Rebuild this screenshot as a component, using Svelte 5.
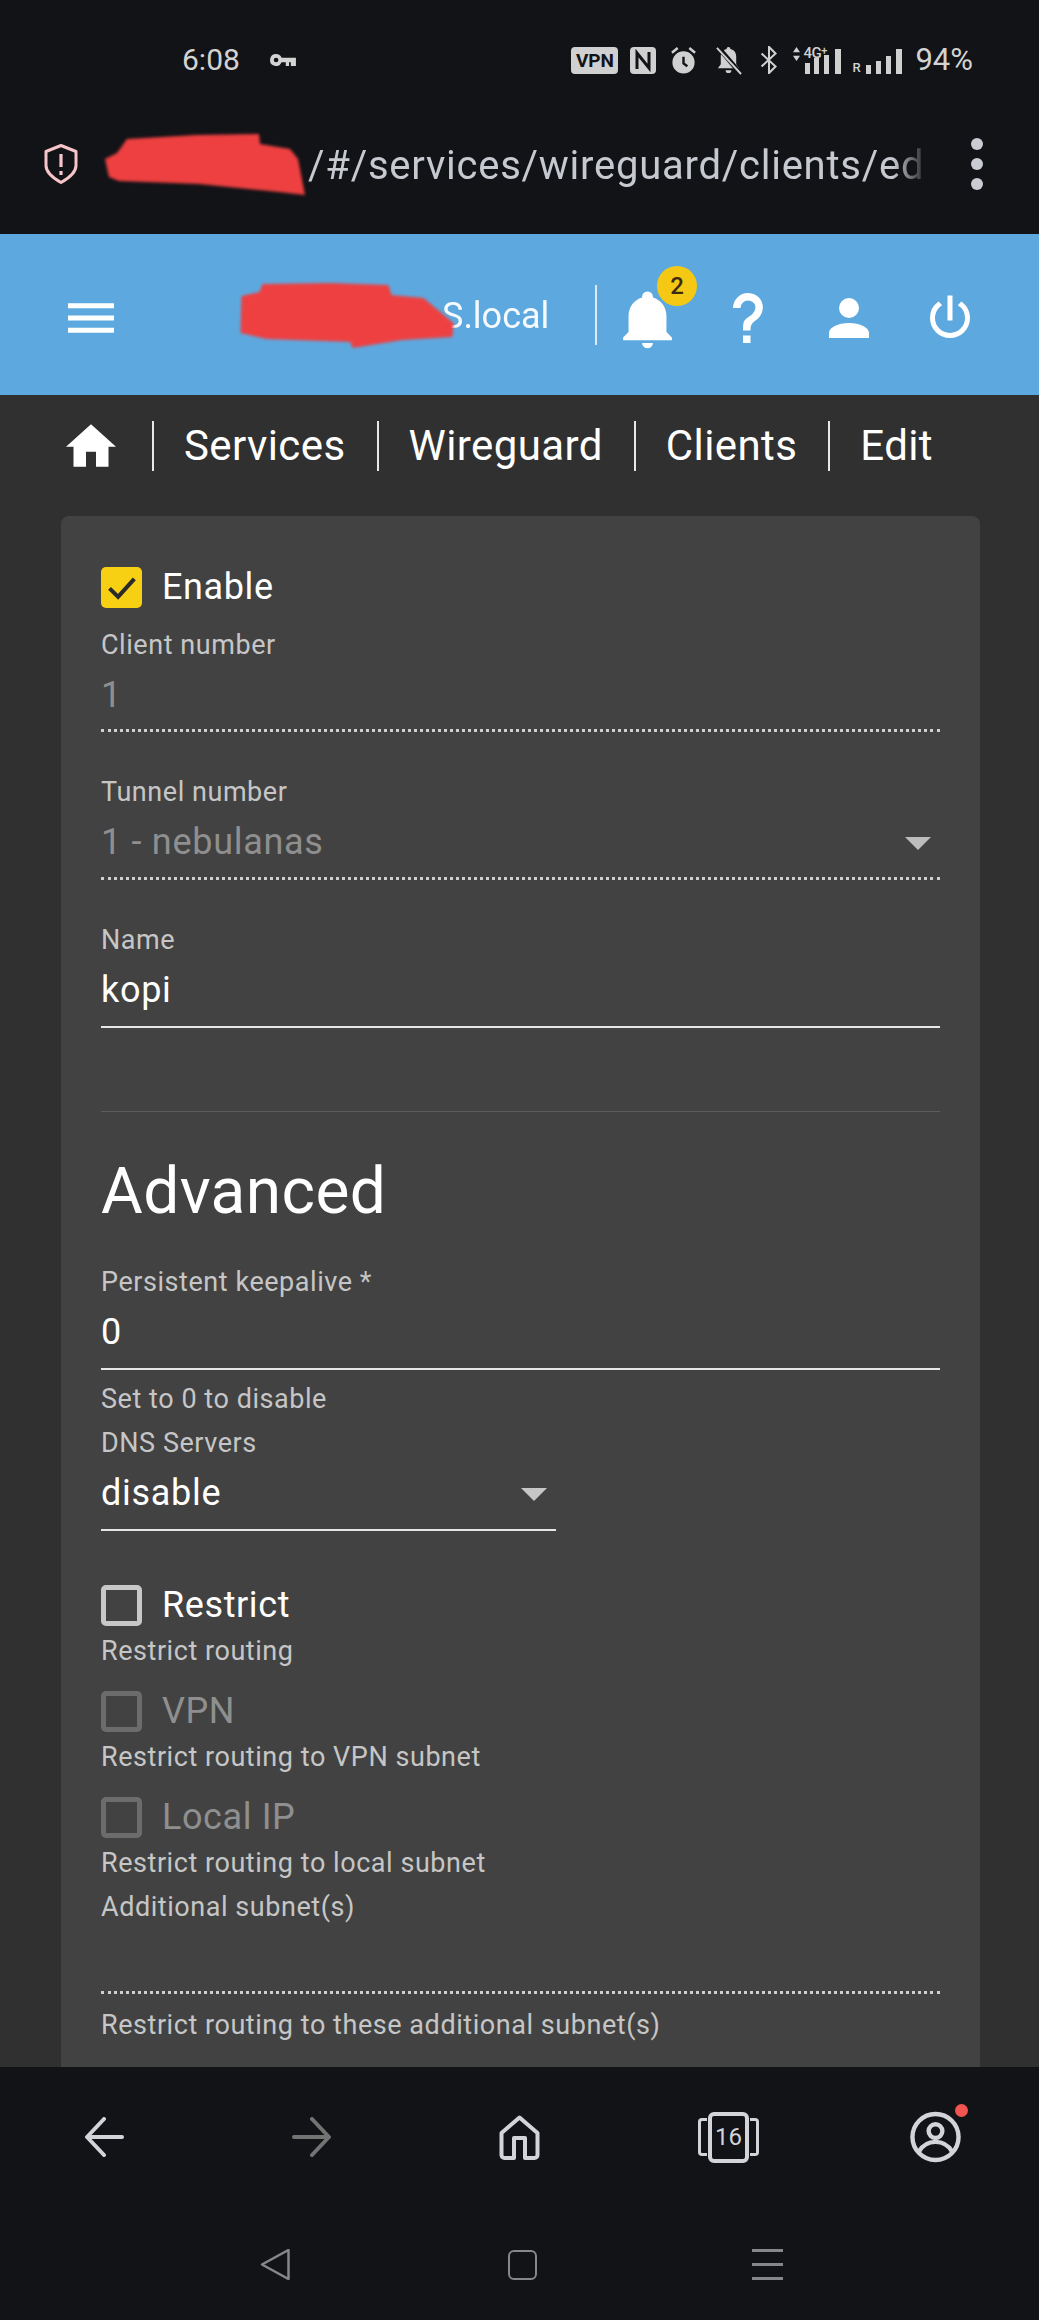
<script>
  const crumbs = ['Services', 'Wireguard', 'Clients', 'Edit'];
</script>

<div class="page">
  <div class="browser-top">
    <div class="status">
      <div class="status-left">
        <span class="time">6:08</span>
        <svg class="key" viewBox="0 0 28 13"><path d="M6.500 0a6.500 6.500 0 1 0 6 9H17v4h3.500V9h2v4H28V4H12.500A6.500 6.500 0 0 0 6.500 0zm0 4a2.500 2.500 0 1 1 0 5 2.500 2.500 0 0 1 0-5z" fill="#d3d3d3" fill-rule="evenodd"/></svg>
      </div>
      <div class="status-right">
        <span class="vpn">VPN</span>
        <svg class="si nfc" viewBox="0 0 26 27"><rect width="26" height="27" rx="4" fill="#d0d0d0"/><path d="M7 22V6l12 15V5" fill="none" stroke="#121317" stroke-width="3"/></svg>
        <svg class="si alarm" viewBox="0 0 28 30"><circle cx="14" cy="17" r="11.500" fill="#d0d0d0"/><path d="M14 11v7l4 3" fill="none" stroke="#121317" stroke-width="2.500"/><path d="M2 7l6-5M26 7l-6-5" stroke="#d0d0d0" stroke-width="2.500"/></svg>
        <svg class="si mute" viewBox="0 0 28 30"><path d="M14 1a2 2 0 0 1 2 2c4 1 6 4 6 8v8l3 4H3l3-4v-8c0-4 2-7 6-8a2 2 0 0 1 2-2zM11 25h6a3 3 0 0 1-6 0z" fill="#d0d0d0"/><path d="M3 1l24 28" stroke="#121317" stroke-width="5"/><path d="M2 2l25 27" stroke="#d0d0d0" stroke-width="2"/></svg>
        <svg class="si bt" viewBox="0 0 20 30"><path d="M2 8l15 14-7 7V1l7 7L2 22" fill="none" stroke="#d0d0d0" stroke-width="2.200"/></svg>
        <div class="net">
          <svg class="arrows" viewBox="0 0 10 16"><path d="M5 0l4 6H1zM5 16l4-6H1z" fill="#d0d0d0"/></svg>
          <span class="g4">4G<sup>+</sup></span>
          <svg class="bars1" viewBox="0 0 37 25"><path d="M0 14h5v11H0zM9 9h5v16H9zM19 6h5v19h-5zM30 0h6v25h-6z" fill="#d0d0d0"/></svg>
        </div>
        <div class="net2">
          <span class="r">R</span>
          <svg class="bars2" viewBox="0 0 36 25"><path d="M0 16h5v9H0zM10 12h5v13h-5zM20 7h5v18h-5zM30 0h6v25h-6z" fill="#d0d0d0"/></svg>
        </div>
        <span class="batt">94%</span>
      </div>
    </div>
    <div class="urlbar">
      <svg class="shield" viewBox="0 0 34 40"><path d="M17 1.500l15 6v14c0 7-6 12-15 17C8 33.500 2 28.500 2 21.500v-14z" fill="none" stroke="#f6c4c9" stroke-width="3" stroke-linejoin="round"/><path d="M17 10v13M17 27v4" stroke="#f6c4c9" stroke-width="3.200"/></svg>
      <div class="url">
        <svg class="blob blob-url" viewBox="0 0 205 66"><path d="M2 28l12-6 10-14 70-4 62-1 1 10 30 5 8 10 7 36-26-3-80-8-80-3-10-4z" fill="#ee4041"/></svg>
        <span class="url-text">/#/services/wireguard/clients/ed</span>
      </div>
      <div class="dots"><i></i><i></i><i></i></div>
    </div>
  </div>

  <main class="main">
    <header class="bar">
      <svg class="menu" viewBox="0 0 47 30"><path d="M0 0h47v5H0zM0 12.500h47v5H0zM0 25h47v5H0z" fill="#fff"/></svg>
      <div class="host">
        <svg class="blob blob-host" viewBox="0 0 212 68"><path d="M0 14l18-4 3-8 68-1 58 2 3 10 32 3 30 25-1 14-50 3-50 8-2-6-84-3-26-6z" fill="#ee4041"/></svg>
        <span class="host-text">S.local</span>
      </div>
      <span class="bar-div"></span>
      <div class="bell">
        <svg viewBox="0 0 24 24"><path d="M21 19v1H3v-1l2-2v-6c0-3.100 2.030-5.830 5-6.710V4a2 2 0 0 1 4 0v.29c2.970.88 5 3.610 5 6.710v6l2 2m-7 2a2 2 0 0 1-4 0" fill="#fff"/></svg>
        <span class="badge">2</span>
      </div>
      <svg class="hicon" viewBox="0 0 24 24"><path d="M10 19h3v3h-3v-3m2-17c5.350.22 7.680 5.620 4.500 9.670-.83 1-2.170 1.660-2.830 2.500C13 15 13 16 13 17h-3c0-1.670 0-3.080.67-4.080.66-1 2-1.590 2.830-2.250C15.920 8.430 15.320 5.260 12 5a3 3 0 0 0-3 3H6a6 6 0 0 1 6-6z" fill="#fff"/></svg>
      <svg class="hicon" viewBox="0 0 24 24"><path d="M12 4a4 4 0 0 1 4 4 4 4 0 0 1-4 4 4 4 0 0 1-4-4 4 4 0 0 1 4-4m0 10c4.420 0 8 1.790 8 4v2H4v-2c0-2.210 3.580-4 8-4z" fill="#fff"/></svg>
      <svg class="hicon" viewBox="0 0 24 24"><path d="M16.560 5.440l-1.450 1.450A5.969 5.969 0 0 1 18 12a6 6 0 0 1-6 6 6 6 0 0 1-6-6c0-2.170 1.160-4.060 2.880-5.120L7.440 5.440A7.961 7.961 0 0 0 4 12a8 8 0 0 0 8 8 8 8 0 0 0 8-8c0-2.720-1.360-5.120-3.440-6.560M13 3h-2v10h2" fill="#fff"/></svg>
    </header>

    <nav class="crumbs">
      <svg class="home" viewBox="2 3 20 17"><path d="M10 20v-6h4v6h5v-8h3L12 3 2 12h3v8z" fill="#fff"/></svg>
      {#each crumbs as c}
        <span class="crumb">{c}</span>
      {/each}
    </nav>

    <section class="card">
      <div class="check first">
        <span class="box on"><svg viewBox="0 0 24 24"><path d="M5 12.500l5 5L19.500 7" fill="none" stroke="#2a2a2a" stroke-width="2.400"/></svg></span>
        <span class="check-label">Enable</span>
      </div>

      <div class="field f-client disabled">
        <label>Client number</label>
        <div class="value">1</div>
      </div>
      <div class="field f-gap disabled">
        <label>Tunnel number</label>
        <div class="value">1 - nebulanas<span class="caret"></span></div>
      </div>
      <div class="field f-gap">
        <label>Name</label>
        <div class="value">kopi</div>
      </div>

      <hr />
      <h2>Advanced</h2>

      <div class="field f-adv">
        <label>Persistent keepalive *</label>
        <div class="value">0</div>
      </div>
      <p class="hint h-key">Set to 0 to disable</p>
      <div class="field f-dns short">
        <label>DNS Servers</label>
        <div class="value">disable<span class="caret"></span></div>
      </div>

      <div class="check c-restrict">
        <span class="box"></span>
        <span class="check-label">Restrict</span>
      </div>
      <p class="hint h-check">Restrict routing</p>
      <div class="check c-sub off">
        <span class="box"></span>
        <span class="check-label">VPN</span>
      </div>
      <p class="hint h-check">Restrict routing to VPN subnet</p>
      <div class="check c-sub off">
        <span class="box"></span>
        <span class="check-label">Local IP</span>
      </div>
      <p class="hint h-check">Restrict routing to local subnet</p>
      <div class="field f-extra disabled">
        <label>Additional subnet(s)</label>
        <div class="value">&nbsp;</div>
      </div>
      <p class="hint h-last">Restrict routing to these additional subnet(s)</p>
    </section>
  </main>

  <footer class="bottom">
    <div class="tools">
      <svg class="t-back" viewBox="0 0 40 40"><path d="M20 2L3 20l17 18M4 20h34" fill="none" stroke="#d2d4d9" stroke-width="4" stroke-linecap="round" stroke-linejoin="round"/></svg>
      <svg class="t-fwd" viewBox="0 0 40 40"><path d="M20 2l17 18-17 18M36 20H2" fill="none" stroke="#737373" stroke-width="4" stroke-linecap="round" stroke-linejoin="round"/></svg>
      <svg class="t-home" viewBox="0 0 41 45"><path d="M20.500 2.500L2.500 18v22a3 3 0 0 0 3 3H15V23h11v20h9.500a3 3 0 0 0 3-3V18z" fill="none" stroke="#d2d4d9" stroke-width="4" stroke-linejoin="round"/></svg>
      <div class="tabs">
        <span class="tabs-side"></span>
        <span class="tabs-main">16</span>
        <span class="tabs-side"></span>
      </div>
      <div class="acct">
        <svg viewBox="0 0 52 52"><circle cx="26" cy="26" r="23.500" fill="none" stroke="#d2d4d9" stroke-width="4.500"/><circle cx="26" cy="20" r="7" fill="none" stroke="#d2d4d9" stroke-width="4.500"/><path d="M9 41c4-7 10-10 17-10s13 3 17 10" fill="none" stroke="#d2d4d9" stroke-width="4.500"/></svg>
        <span class="dot"></span>
      </div>
    </div>
    <div class="softkeys">
      <svg class="soft" viewBox="0 0 30 31"><path d="M28.500 1L2 15.500 28.500 30z" fill="none" stroke="#85878b" stroke-width="2.500" stroke-linejoin="round"/></svg>
      <span class="soft-home"></span>
      <div class="soft-menu"><i></i><i></i><i></i></div>
    </div>
  </footer>
</div>

<style>
  :global(body) { margin: 0; background: #121317; }
  .page {
    width: 1039px; height: 2320px; display: flex; flex-direction: column; overflow: hidden;
    font-family: Roboto, "Liberation Sans", sans-serif; background: #121317; color: #fff;
  }

  .browser-top { height: 234px; flex: none; background: #121317; }
  .status { height: 121px; box-sizing: border-box; padding: 43px 66px 0 182px; display: flex; justify-content: space-between; align-items: flex-start; }
  .status-left { display: flex; align-items: center; gap: 30px; height: 34px; }
  .time { font-size: 30px; color: #d3d3d3; line-height: 34px; }
  .key { width: 26px; height: 12px; }
  .status-right { display: flex; align-items: center; height: 34px; }
  .vpn { width: 47px; height: 27px; background: #d0d0d0; color: #121317; border-radius: 4px; font-size: 19px; font-weight: 700; line-height: 27px; text-align: center; margin-right: 12px; }
  .si { flex: none; }
  .nfc { width: 26px; height: 27px; margin-right: 14px; }
  .alarm { width: 27px; height: 29px; margin-right: 18px; }
  .mute { width: 27px; height: 29px; margin-right: 17px; }
  .bt { width: 20px; height: 28px; margin-right: 13px; }
  .net { position: relative; width: 50px; height: 27px; margin-right: 10px; }
  .arrows { position: absolute; left: 0; top: 0; width: 9px; height: 14px; }
  .g4 { position: absolute; left: 11px; top: -3px; font-size: 15px; font-weight: 500; color: #d0d0d0; line-height: 18px; letter-spacing: -.5px; }
  .g4 sup { font-size: 11px; vertical-align: 4px; line-height: 0; }
  .bars1 { position: absolute; right: 0; bottom: 0; width: 37px; height: 25px; }
  .net2 { display: flex; align-items: flex-end; height: 27px; margin-right: 13px; }
  .r { font-size: 13px; font-weight: 500; color: #d0d0d0; line-height: 12px; margin-right: 4px; width: 10px; }
  .bars2 { width: 36px; height: 25px; }
  .batt { font-size: 31px; color: #d3d3d3; line-height: 34px; }

  .urlbar { display: flex; align-items: center; height: 78px; margin-top: 4px; padding: 0 0 0 44px; }
  .shield { width: 34px; height: 40px; flex: none; margin-right: 25px; }
  .url { display: flex; align-items: center; width: 821px; overflow: hidden; position: relative; height: 78px; }
  .blob { filter: blur(1.500px); flex: none; position: relative; z-index: 1; }
  .blob-url { width: 205px; height: 66px; margin-right: 0; }
  .url-text { font-size: 40px; color: #c6c9d0; white-space: nowrap; letter-spacing: .75px; position: relative; top: 1px; -webkit-mask-image: linear-gradient(to right, #000 585px, transparent 622px); mask-image: linear-gradient(to right, #000 585px, transparent 622px); }
  .dots { display: flex; flex-direction: column; gap: 8px; margin-left: 47px; }
  .dots i { display: block; width: 12px; height: 12px; border-radius: 50%; background: #c9ccd2; }

  .main { flex: 1; min-height: 0; overflow: hidden; background: #303030; }
  .bar { height: 161px; box-sizing: border-box; background: #5da9df; display: flex; align-items: center; padding: 7px 59px 0 68px; }
  .menu { width: 46px; height: 30px; flex: none; }
  .host { display: flex; align-items: center; margin-left: 124px; width: 357px; flex: none; margin-top: -4px; }
  .blob-host { width: 219px; height: 68px; margin-right: -15px; }
  .host-text { font-size: 36px; color: #fff; opacity: .95; }
  .bar-div { width: 2px; height: 60px; background: #dbeaf6; flex: none; margin-top: -7px; }
  .bell { position: relative; width: 65px; height: 65px; margin-left: 18px; margin-right: -3px; flex: none; }
  .bell svg { width: 65px; height: 65px; display: block; }
  .badge { position: absolute; left: 42px; top: -20px; width: 40px; height: 40px; border-radius: 50%; background: #f5c913; color: #3c2a10; font-size: 24px; font-weight: 500; line-height: 40px; text-align: center; }
  .hicon { width: 60px; height: 60px; flex: none; margin-left: 41px; }

  .crumbs { display: flex; align-items: center; height: 121px; box-sizing: border-box; padding: 0 0 20px 66px; }
  .home { width: 50px; height: 43px; flex: none; margin-right: 36px; }
  .crumb { font-size: 42px; letter-spacing: .4px; line-height: 50px; padding: 0 31px 0 30px; border-left: 2px solid #e8e8e8; white-space: nowrap; }

  .card { margin: 0 59px 0 61px; background: #424242; border-radius: 8px 8px 0 0; box-sizing: border-box; padding: 0 40px; height: 1600px; }
  .check { display: flex; align-items: center; }
  .check.first { padding-top: 51px; height: 41px; }
  .box { width: 41px; height: 41px; box-sizing: border-box; border: 5px solid #c8c8c8; border-radius: 5px; flex: none; display: block; }
  .box.on { background: #f7cf13; border: none; }
  .box.on svg { width: 41px; height: 41px; display: block; }
  .check-label { font-size: 36px; letter-spacing: .6px; margin-left: 20px; line-height: 41px; color: #fff; }
  .off .box { border-color: #6c6c6c; }
  .off .check-label { color: #8f8f8f; }

  .field label { display: block; font-size: 27px; letter-spacing: .55px; line-height: 30px; color: #c6c6c6; white-space: nowrap; }
  .value { position: relative; font-size: 36px; letter-spacing: .7px; line-height: 42px; padding-top: 14px; padding-bottom: 15px; color: #fff; border-bottom: 2px solid #e6e6e6; }
  .disabled .value { color: #8f8f8f; border-bottom: 3px dotted #cfcfcf; padding-bottom: 14px; }
  .f-client { margin-top: 22px; }
  .f-client .value { padding-bottom: 13px; }
  .f-gap { margin-top: 45px; }
  .f-adv { margin-top: 39px; }
  .f-dns { margin-top: 14px; }
  .f-extra { margin-top: 14px; }
  .f-extra .value { padding-top: 13px; }
  .short { width: 455px; }
  .caret { position: absolute; right: 9px; top: 30px; width: 0; height: 0; border-left: 13px solid transparent; border-right: 13px solid transparent; border-top: 13px solid #bdbdbd; }
  .short .caret { border-top-color: #c6c6c6; }

  hr { border: none; height: 1px; background: #5c5c5c; margin: 83px 0 0; }
  h2 { margin: 44px 0 0; font-size: 64px; font-weight: 400; line-height: 72px; color: #fff; letter-spacing: .4px; }
  .hint { margin: 0; font-size: 27px; letter-spacing: .55px; line-height: 30px; color: #c6c6c6; white-space: nowrap; }
  .h-key { margin-top: 14px; }
  .h-check { margin-top: 10px; }
  .h-last { margin-top: 16px; }
  .c-restrict { margin-top: 54px; }
  .c-sub { margin-top: 25px; }

  .bottom { height: 253px; flex: none; background: #121317; position: relative; z-index: 1; }
  .tools { display: flex; align-items: center; height: 140px; padding-left: 84px; }
  .t-back, .t-fwd { width: 40px; height: 40px; flex: none; }
  .t-fwd { margin-left: 168px; }
  .t-home { width: 41px; height: 45px; margin-left: 167px; flex: none; }
  .tabs { margin-left: 158px; display: flex; align-items: center; flex: none; width: 61px; height: 51px; justify-content: space-between; }
  .tabs-side { width: 9px; height: 38px; border: 3.500px solid #d2d4d9; border-radius: 4px; box-sizing: border-box; }
  .tabs-side:first-child { border-right: none; border-radius: 4px 0 0 4px; }
  .tabs-side:last-child { border-left: none; border-radius: 0 4px 4px 0; }
  .tabs-main { width: 41px; height: 51px; border: 4px solid #d2d4d9; border-radius: 6px; box-sizing: border-box; font-size: 24px; line-height: 43px; text-align: center; color: #d2d4d9; }
  .acct { position: relative; margin-left: 151px; width: 51px; height: 52px; flex: none; }
  .acct svg { width: 51px; height: 52px; display: block; }
  .dot { position: absolute; right: -7px; top: -7px; width: 13px; height: 13px; border-radius: 50%; background: #f25550; }
  .softkeys { display: flex; align-items: center; height: 31px; margin-top: 42px; padding-left: 260px; }
  .soft { width: 30px; height: 31px; flex: none; }
  .soft-home { width: 29px; height: 30px; border: 2.500px solid #85878b; border-radius: 6px; margin-left: 218px; flex: none; box-sizing: border-box; }
  .soft-menu { display: flex; flex-direction: column; justify-content: space-between; height: 31px; width: 31px; margin-left: 215px; }
  .soft-menu i { display: block; height: 3px; background: #85878b; }
</style>
